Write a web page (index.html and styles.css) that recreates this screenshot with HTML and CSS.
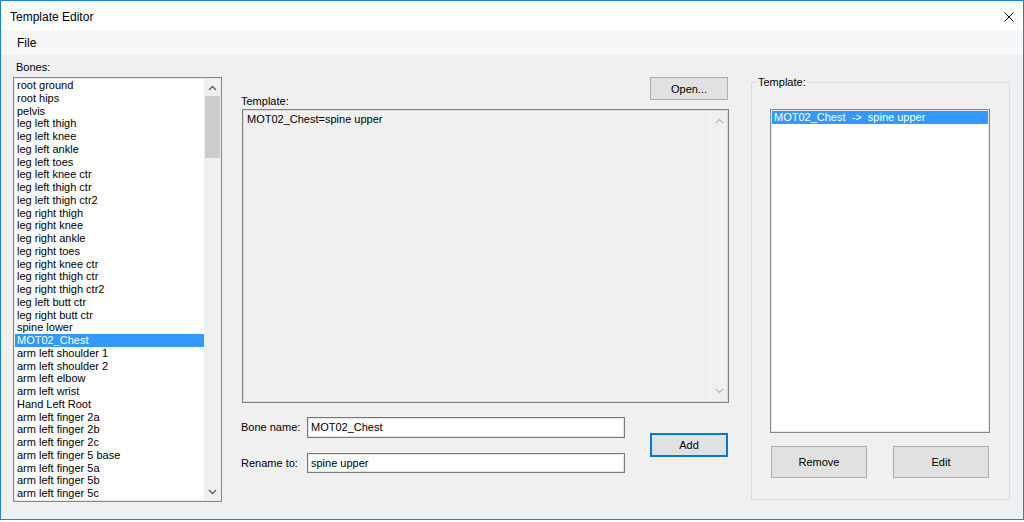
FILE: index.html
```html
<!DOCTYPE html>
<html>
<head>
<meta charset="utf-8">
<title>Template Editor</title>
<link rel="stylesheet" href="styles.css">
</head>
<body>
<div class="window">
  <div class="titlebar">
    <span class="title">Template Editor</span>
    <svg class="close" width="10" height="10" viewBox="0 0 10 10"><path d="M0.5 0.5 L9.5 9.5 M9.5 0.5 L0.5 9.5" stroke="#000" stroke-width="1" fill="none"/></svg>
  </div>
  <div class="menubar"><span class="menu-item">File</span></div>
  <div class="content">
    <div class="col-bones">
      <div class="label bones-label">Bones:</div>
      <div class="listbox bones-list">
        <div class="items">
          <div class="item">root ground</div>
          <div class="item">root hips</div>
          <div class="item">pelvis</div>
          <div class="item">leg left thigh</div>
          <div class="item">leg left knee</div>
          <div class="item">leg left ankle</div>
          <div class="item">leg left toes</div>
          <div class="item">leg left knee ctr</div>
          <div class="item">leg left thigh ctr</div>
          <div class="item">leg left thigh ctr2</div>
          <div class="item">leg right thigh</div>
          <div class="item">leg right knee</div>
          <div class="item">leg right ankle</div>
          <div class="item">leg right toes</div>
          <div class="item">leg right knee ctr</div>
          <div class="item">leg right thigh ctr</div>
          <div class="item">leg right thigh ctr2</div>
          <div class="item">leg left butt ctr</div>
          <div class="item">leg right butt ctr</div>
          <div class="item">spine lower</div>
          <div class="item selected">MOT02_Chest</div>
          <div class="item">arm left shoulder 1</div>
          <div class="item">arm left shoulder 2</div>
          <div class="item">arm left elbow</div>
          <div class="item">arm left wrist</div>
          <div class="item">Hand Left Root</div>
          <div class="item">arm left finger 2a</div>
          <div class="item">arm left finger 2b</div>
          <div class="item">arm left finger 2c</div>
          <div class="item">arm left finger 5 base</div>
          <div class="item">arm left finger 5a</div>
          <div class="item">arm left finger 5b</div>
          <div class="item">arm left finger 5c</div>
        </div>
        <div class="vscroll">
          <div class="sb-btn"><svg width="9" height="6" viewBox="0 0 9 6"><path d="M1 5 L4.5 1.5 L8 5" stroke="#606060" stroke-width="1.4" fill="none"/></svg></div>
          <div class="sb-thumb"></div>
          <div class="sb-track"></div>
          <div class="sb-btn"><svg width="9" height="6" viewBox="0 0 9 6"><path d="M1 1 L4.5 4.5 L8 1" stroke="#606060" stroke-width="1.4" fill="none"/></svg></div>
        </div>
      </div>
    </div>

    <div class="col-mid">
      <div class="mid-top">
        <div class="label template-label">Template:</div>
        <button class="btn open-btn">Open...</button>
      </div>
      <div class="textarea">
        <div class="ta-text">MOT02_Chest=spine upper</div>
        <div class="vscroll disabled">
          <div class="sb-btn"><svg width="9" height="6" viewBox="0 0 9 6"><path d="M1 5 L4.5 1.5 L8 5" stroke="#c0c0c0" stroke-width="1.4" fill="none"/></svg></div>
          <div class="sb-track"></div>
          <div class="sb-btn"><svg width="9" height="6" viewBox="0 0 9 6"><path d="M1 1 L4.5 4.5 L8 1" stroke="#c0c0c0" stroke-width="1.4" fill="none"/></svg></div>
        </div>
      </div>
      <div class="form-row">
        <div class="fields">
          <div class="field field-bone">
            <span class="field-label">Bone name:</span>
            <div class="input input-bone">MOT02_Chest</div>
          </div>
          <div class="field field-rename">
            <span class="field-label">Rename to:</span>
            <div class="input input-rename">spine upper</div>
          </div>
        </div>
        <button class="btn add-btn">Add</button>
      </div>
    </div>

    <fieldset class="group">
      <legend class="legend">Template:</legend>
      <div class="listbox right-list">
        <div class="items">
          <div class="item selected pre">MOT02_Chest  -&gt;  spine upper</div>
        </div>
      </div>
      <div class="group-buttons">
        <button class="btn big-btn">Remove</button>
        <button class="btn big-btn">Edit</button>
      </div>
    </fieldset>
  </div>
</div>
</body>
</html>
```

FILE: styles.css
```css
html, body {
  margin: 0;
  padding: 0;
  background: #ffffff;
}

body {
  font-family: "Liberation Sans", Arial, sans-serif;
  font-size: 11px;
  color: #000;
}

.window {
  width: 1024px;
  height: 520px;
  box-sizing: border-box;
  border: 1px solid #1883d7;
  display: flex;
  flex-direction: column;
  background: #f0f0f0;
}

.titlebar {
  height: 30px;
  flex: none;
  background: #ffffff;
  display: flex;
  align-items: center;
  justify-content: space-between;
  padding: 0 9px;
  font-size: 12px;
}

.title {
  line-height: 14px;
  margin-top: 1px;
}

.close {
  display: block;
  margin-top: 1px;
}

.menubar {
  height: 24px;
  flex: none;
  background: #f8f8f8;
  display: flex;
  align-items: center;
  padding-left: 16px;
  font-size: 12px;
}

.content {
  flex: 1;
  display: flex;
  align-items: flex-start;
  padding: 6px 0 0 12px;
}

.label {
  line-height: 13px;
  white-space: nowrap;
}

/* Bones column */
.col-bones {
  width: 209px;
  flex: none;
}

.bones-label {
  height: 13px;
  margin-bottom: 3px;
  padding-left: 3px;
}

.listbox {
  box-sizing: border-box;
  background: #ffffff;
  border: 1px solid #828790;
  box-shadow: inset 0 0 0 1px #e8e8e8;
  padding: 1px;
  display: flex;
  overflow: hidden;
}

.bones-list {
  height: 425px;
  padding-right: 0;
}

.items {
  flex: 1;
  min-width: 0;
  overflow: hidden;
}

.item {
  height: 12.75px;
  line-height: 12.75px;
  padding-left: 2px;
  white-space: nowrap;
}

.item.selected {
  background: #3399ff;
  color: #ffffff;
}

.pre {
  white-space: pre;
}

.vscroll {
  width: 17px;
  flex: none;
  background: #f0f0f0;
  display: flex;
  flex-direction: column;
}

.sb-btn {
  height: 17px;
  flex: none;
  display: flex;
  align-items: center;
  justify-content: center;
}

.sb-btn svg {
  display: block;
}

.sb-thumb {
  height: 62px;
  flex: none;
  margin: 0 1px;
  background: #cdcdcd;
}

.sb-track {
  flex: 1;
}

/* Middle column */
.col-mid {
  width: 488px;
  flex: none;
  margin-left: 19px;
}

.mid-top {
  display: flex;
  justify-content: space-between;
  align-items: flex-start;
  margin-top: 16px;
}

.template-label {
  margin-top: 18px;
}

.btn {
  font-family: "Liberation Sans", Arial, sans-serif;
  font-size: 11px;
  color: #000;
  background: #e1e1e1;
  border: 1px solid #adadad;
  padding: 0;
  margin: 0;
  box-sizing: border-box;
  text-align: center;
}

.open-btn {
  width: 78px;
  height: 23px;
  margin-right: 1px;
}

.textarea {
  box-sizing: border-box;
  width: 487px;
  height: 294px;
  margin: 1px 0 0 1px;
  border: 1px solid #828282;
  box-shadow: inset 0 0 0 1px #dadada;
  padding: 1px;
  background: #f0f0f0;
  display: flex;
}

.ta-text {
  flex: 1;
  padding: 2px 0 0 3px;
  line-height: 13px;
}

.vscroll.disabled {
  border-left: 1px solid #f7f7f7;
  width: 16px;
}

.vscroll.disabled .sb-btn {
  height: 20px;
}

.form-row {
  display: flex;
  align-items: flex-start;
}

.fields {
  display: flex;
  flex-direction: column;
}

.field {
  display: flex;
  align-items: center;
}

.field-bone {
  margin-top: 14px;
}

.field-rename {
  margin-top: 15px;
}

.field-label {
  width: 66px;
  flex: none;
  line-height: 13px;
}

.input {
  box-sizing: border-box;
  width: 318px;
  background: #ffffff;
  border: 1px solid #7a7a7a;
  box-shadow: inset 0 0 0 1px #e3e3e3;
  padding-left: 3px;
  display: flex;
  align-items: center;
  line-height: 13px;
}

.input-bone {
  height: 21px;
}

.input-rename {
  height: 20px;
}

.add-btn {
  width: 78px;
  height: 24px;
  margin-top: 30px;
  margin-left: auto;
  margin-right: 1px;
  border: 2px solid #0078d7;
}

/* Right group */
.group {
  box-sizing: border-box;
  width: 259px;
  flex: none;
  margin: 15px 0 0 22px;
  padding: 20px 0 21px 0;
  border: 1px solid #dcdcdc;
  min-width: 0;
}

.legend {
  padding: 0 1px;
  margin-left: 5px;
  line-height: 13px;
}

.right-list {
  width: 220px;
  height: 324px;
  margin-left: 18px;
}

.right-list .item {
  height: 13px;
  line-height: 13px;
}

.group-buttons {
  display: flex;
  justify-content: space-between;
  width: 218px;
  margin: 13px 0 0 19px;
}

.big-btn {
  width: 96px;
  height: 32px;
}
```
